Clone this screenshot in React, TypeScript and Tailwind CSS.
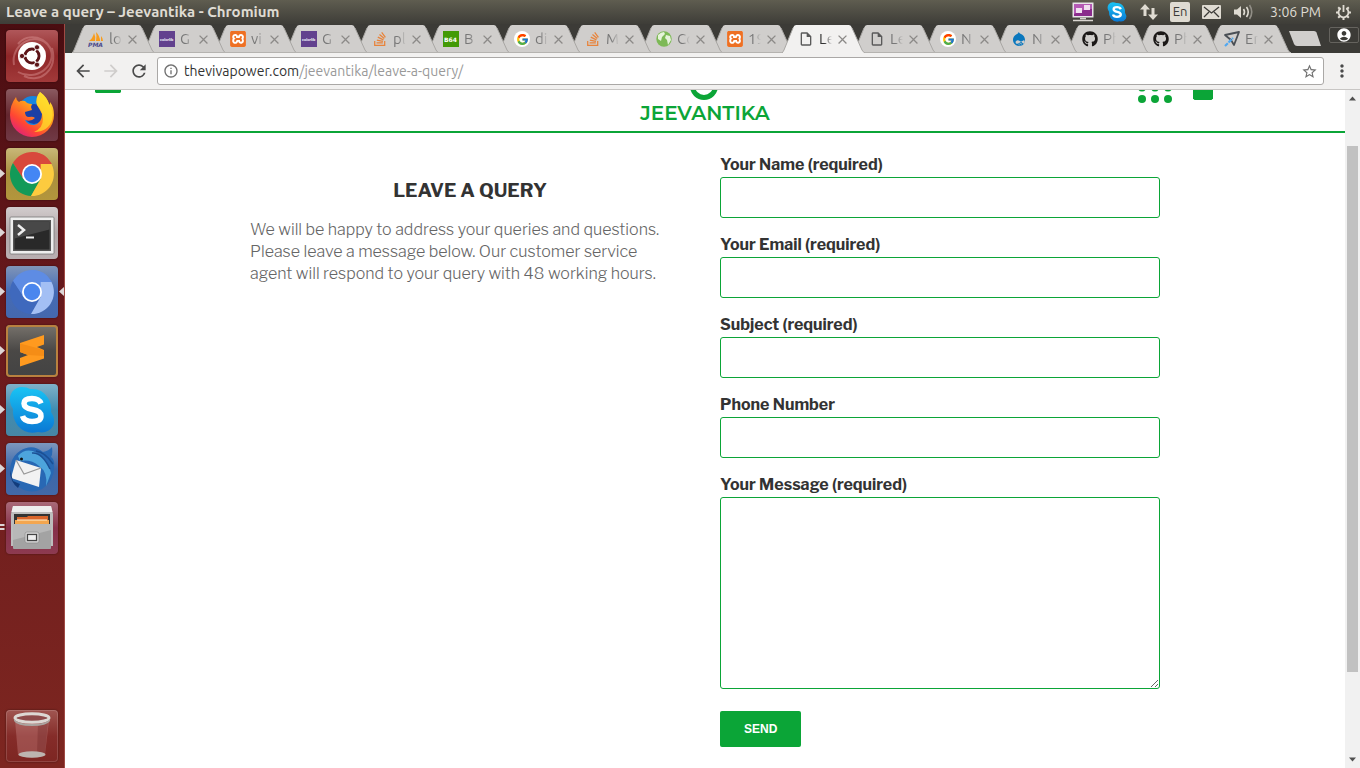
import type { ReactNode } from "react";
import { FaDrupal, FaGithub, FaStackOverflow } from "react-icons/fa";
import { FcGoogle } from "react-icons/fc";
import { SiXampp } from "react-icons/si";
import {
  MdAccountCircle,
  MdArrowBack,
  MdArrowForward,
  MdClose,
  MdInfoOutline,
  MdMoreVert,
  MdOutlineInsertDriveFile,
  MdRefresh,
  MdStarBorder,
} from "react-icons/md";

/* ---------- Top panel ---------- */

function TopPanel() {
  return (
    <header className="flex h-6 shrink-0 items-center justify-between bg-linear-to-b from-[#5f5d50] to-[#3e3d38] pr-2 pl-1.5 text-[#dfdbd2]">
      <h1 className="text-[15px] leading-5 font-bold whitespace-nowrap">Leave a query – Jeevantika - Chromium</h1>
      <div className="flex items-center gap-3">
        <svg width="22" height="20" viewBox="0 0 22 20" aria-hidden="true">
          <rect x=".5" y=".5" width="21" height="15" fill="#e8e4e8" />
          <rect x="2" y="2" width="18" height="12" fill="#8a2b8c" />
          <path d="M2 2h18v5q-9 0-18 5z" fill="#b45ab4" />
          <rect x="4" y="6" width="6" height="5" fill="#f0dff0" />
          <rect x="12" y="3" width="6" height="5" fill="#f0dff0" />
          <path d="M1 18.5h20M8 16.5h6" stroke="#d8d4d0" strokeWidth="1.5" />
        </svg>
        <span className="block size-[22px]">{skype}</span>
        <svg width="18" height="18" viewBox="0 0 18 18" fill="#dfdbd2" aria-hidden="true">
          <path d="M5 1l5 5.5H6.5V13h-3V6.5H0zM13 17l-5-5.5h3.500V5h3v6.500H18z" />
        </svg>
        <span className="flex h-5 w-5 items-center justify-center rounded-xs bg-[#dfdbd2] text-[13px] text-[#3c3b37]">En</span>
        <svg width="19" height="14" viewBox="0 0 19 14" aria-hidden="true">
          <rect width="19" height="14" rx="1" fill="#dfdbd2" />
          <path d="M2 2l7.500 6L17 2M2 12l5-5M17 12l-5-5" fill="none" stroke="#3c3b37" strokeWidth="1.300" />
        </svg>
        <svg width="21" height="16" viewBox="0 0 21 16" aria-hidden="true">
          <path d="M1 5.500h3L8 2v12l-4-3.500H1z" fill="#dfdbd2" />
          <path d="M10.500 5q2 3 0 6M13.500 3q3.500 5 0 10" fill="none" stroke="#dfdbd2" strokeWidth="1.600" />
          <path d="M16.500 1q4.500 7 0 14" fill="none" stroke="#918e86" strokeWidth="1.600" />
        </svg>
        <time className="pr-0.5 pl-1 text-sm whitespace-nowrap">3:06 PM</time>
        <svg width="17" height="17" viewBox="0 0 17 17" fill="none" stroke="#dfdbd2" aria-hidden="true">
          <path d="M5.800 4.200a5 5 0 1 0 5.400 0" strokeWidth="1.800" />
          <path d="M8.500 1v7" strokeWidth="1.800" />
          <path d="M1 8.500h2.500M13.500 8.500H16M8.500 13.500V16M3.200 3.200L5 5M13.800 3.200L12 5M3.200 13.800L5 12M13.800 13.800L12 12" strokeWidth="2" />
        </svg>
      </div>
    </header>
  );
}

/* ---------- Launcher ---------- */

const ubuntu = (
  <svg viewBox="0 0 52 52" aria-hidden="true">
    <path d="M8 35C4 14 30 0 43 16M44 17C52 36 30 52 12 42M18 46c16 8 34-6 28-28M12 14C22 2 42 6 46 24" fill="none" stroke="#e3a0a0" strokeOpacity=".4" strokeWidth="2" />
    <circle cx="26" cy="26" r="14" fill="#fff" />
    <circle cx="26" cy="26" r="7" fill="none" stroke="#5c1418" strokeWidth="3" />
    <path d="M26 26H14M26 26l6-10.400M26 26l6 10.400" stroke="#fff" strokeWidth="1.500" />
    <circle cx="26" cy="26" r="5.300" fill="#fff" />
    <g fill="#5c1418" stroke="#fff" strokeWidth=".8">
      <circle cx="16" cy="26" r="2.600" />
      <circle cx="31" cy="17.300" r="2.600" />
      <circle cx="31" cy="34.700" r="2.600" />
    </g>
  </svg>
);

const firefox = (
  <svg viewBox="0 0 52 52" aria-hidden="true">
    <defs>
      <linearGradient id="ffBody" x1=".85" y1=".05" x2=".2" y2=".95">
        <stop offset="0" stopColor="#ffe830" />
        <stop offset=".4" stopColor="#ff9a1a" />
        <stop offset=".75" stopColor="#ff4633" />
        <stop offset="1" stopColor="#e02378" />
      </linearGradient>
    </defs>
    <circle cx="27" cy="22" r="15" fill="#1686e0" />
    <circle cx="28" cy="25" r="10" fill="#1b3fa6" />
    <path d="M10 8q-6 8-6 18a22 22 0 0 0 44 0q0-8-4-13 0 2-.5 3Q41 8 34 3q-5 6-3 13 3 5 5 9 0 9-8 11-7 0-9-5 6 2 10-2-2-2-6-1-4 0-4-5l7-2-1-3 1-3q-5 0-7-3-4-1-6 1-3-2-3-5z" fill="url(#ffBody)" />
    <path d="M34 3q-5 6-3 13 6 7 6 14 0 9-9 13 14 0 18-12 2-9-2.500-15Q41 8 34 3z" fill="#ffdf2c" fillOpacity=".75" />
  </svg>
);

type RingProps = { top: string; left: string; right: string; core: string };

function ChromeDisc({ top, left, right, core }: RingProps) {
  return (
    <svg viewBox="0 0 52 52" aria-hidden="true">
      <path d="M26 26V4a22 22 0 0 1 19.050 11z" fill={top} />
      <path d="M6.950 15A22 22 0 0 1 45.050 15L46 16H26l-8.660 15z" fill={top} />
      <path d="M6.950 15A22 22 0 0 0 25 48l9.660-17H26l-8.660 0z" fill={left} />
      <path d="M45.500 16A22 22 0 0 1 25 48l9.660-17L34.660 16z" fill={right} />
      <circle cx="26" cy="26" r="10" fill="#fff" />
      <circle cx="26" cy="26" r="8.200" fill={core} />
    </svg>
  );
}

const terminal = (
  <svg viewBox="0 0 52 52" aria-hidden="true">
    <rect x="4" y="10" width="44" height="37" rx="1" fill="#eee" stroke="#777" strokeWidth=".8" />
    <rect x="7" y="13" width="38" height="31" fill="#555" />
    <rect x="8.500" y="14.500" width="35" height="28" fill="#292929" />
    <path d="M8.500 14.500h35v8l-35 9z" fill="#484848" />
    <path d="M12 18l6 5-6 5" fill="none" stroke="#eee" strokeWidth="2.500" />
    <path d="M20 30.500h8" stroke="#eee" strokeWidth="2" />
  </svg>
);

const sublime = (
  <svg viewBox="0 0 52 52" aria-hidden="true">
    <path d="M14 18l24-8v9.500L31 22l7 3v8.500l-24 8V33l8-3-8-3z" fill="#ff9a1f" />
    <path d="M14 18.500L31 23l7 2.500V31l-16-1-8-3z" fill="#f58d16" />
  </svg>
);

const skype = (
  <svg viewBox="0 0 52 52" aria-hidden="true">
    <defs>
      <linearGradient id="skyBody" x1="0" y1="0" x2="0" y2="1">
        <stop offset="0" stopColor="#1ac4f4" />
        <stop offset="1" stopColor="#0a78d4" />
      </linearGradient>
    </defs>
    <path d="M16 3q5 0 8 2 12-1 18 9 4 7 3 14 5 7 2 14-5 8-15 6-12 3-20-6-6-8-5-17Q1 16 6 8q4-5 10-5z" fill="url(#skyBody)" />
    <path d="M35 19.500q-2-5-9-5-8 0-8 5 0 4.500 8.500 6 8.500 1.500 8.500 6.500 0 5.500-9 5.500-8 0-9.500-5.500" fill="none" stroke="#fff" strokeWidth="5.500" />
  </svg>
);

const thunderbird = (
  <svg viewBox="0 0 52 52" aria-hidden="true">
    <path d="M14 8Q26 0 37 9q6-1 9-5 1 7-1 10 4 3 3 9 1 14-12 23-14 7-27-5-7-9-4-20 2-9 9-13z" fill="#2868b4" />
    <path d="M12 13Q20 4 31 10q11 6 14 20l-5 13q2-14-7-20-8-7-19-5z" fill="#4da4dc" />
    <path d="M26 10q10-1 18 16M30 8q9 1 17 13" fill="none" stroke="#1b4f94" strokeWidth="1.500" />
    <path d="M10 17l25 8-2 19-28-9z" fill="#f2f2f2" />
    <path d="M10 17l8 14 17-6" fill="none" stroke="#999" strokeWidth="1.200" />
    <path d="M4 27l3 11 7 3-2 4Q4 39 4 27z" fill="#123c7c" />
    <circle cx="15.500" cy="16" r="1.500" fill="#111" />
  </svg>
);

const files = (
  <svg viewBox="0 0 52 52" aria-hidden="true">
    <path d="M7 4h38l2 8v32H5V12z" fill="#bdbdbd" />
    <path d="M7 4h38l1.500 6h-41z" fill="#eee" />
    <rect x="8" y="12" width="36" height="12" fill="#333" />
    <path d="M11 24v-9h10l1-1h20v10z" fill="#d9652b" />
    <path d="M9 24v-6h34v6z" fill="#f3a64f" />
    <path d="M11 18h30" stroke="#fff0d0" strokeWidth="1" />
    <rect x="7" y="22" width="38" height="25" rx="1" fill="#a3a3a3" />
    <path d="M7 22h38v6L7 38z" fill="#b8b8b8" />
    <rect x="19" y="30" width="14" height="11" rx="2" fill="#d0d0d0" stroke="#888" strokeWidth=".6" />
    <rect x="21.500" y="32.500" width="9" height="6" fill="#eee" stroke="#444" strokeWidth="1.200" />
  </svg>
);

const trash = (
  <svg viewBox="0 0 52 52" aria-hidden="true">
    <path d="M9 10h34l-4 35q-13 5-27 0z" fill="#d9a0a0" fillOpacity=".3" />
    <path d="M32 14l-1 30 8-1 3-31z" fill="#5c1512" fillOpacity=".25" />
    <ellipse cx="26" cy="44.500" rx="13.500" ry="3.200" fill="#bdb5b0" />
    <ellipse cx="26" cy="8" rx="17" ry="4.200" fill="#8e4b4b" stroke="#ddd8d4" strokeWidth="3" />
    <path d="M8 9q3 5 18 5t18-5v2q-3 5-18 5T8 11z" fill="#aaa4a0" />
  </svg>
);

type Launch = { name: string; tile: string; art: ReactNode; pip?: "one" | "two" | "focus" };

const launchers: Launch[] = [
  { name: "Search", tile: "from-[#b0575a] via-[#8f2628] to-[#a23a3a]", art: ubuntu },
  { name: "Firefox", tile: "from-[#8b5a60] via-[#64262f] to-[#713a46]", art: firefox },
  {
    name: "Chrome",
    tile: "from-[#c9b878] via-[#a98f3e] to-[#b3963c]",
    art: <ChromeDisc top="#d8483c" left="#129a58" right="#fccb3f" core="#4486f4" />,
    pip: "one",
  },
  { name: "Terminal", tile: "from-[#d2cccd] via-[#b2a8aa] to-[#b9afb1]", art: terminal, pip: "one" },
  {
    name: "Chromium",
    tile: "from-[#8095b8] via-[#456bb5] to-[#4468ae]",
    art: <ChromeDisc top="#5e8ce4" left="#3f69bd" right="#a3bff4" core="#4a86ee" />,
    pip: "focus",
  },
  { name: "Sublime Text", tile: "from-[#77726c] via-[#4a4846] to-[#434343] ring-2 ring-[#b9813f] ring-inset", art: sublime, pip: "one" },
  { name: "Skype", tile: "from-[#7fb2ca] via-[#3f8cb0] to-[#4786a4]", art: skype, pip: "one" },
  { name: "Thunderbird", tile: "from-[#7d97bd] via-[#3b66a8] to-[#4269a8]", art: thunderbird, pip: "one" },
  { name: "Files", tile: "from-[#a96a79] via-[#86304a] to-[#8d3a50]", art: files, pip: "two" },
];

function LaunchTile({ name, tile, art, pip }: Launch) {
  return (
    <li className="relative px-1.5">
      <button
        type="button"
        aria-label={name}
        className={`block size-[52px] rounded-sm bg-linear-to-b shadow-[0_0_2px_rgba(0,0,0,.5)] ${tile}`}
      >
        {art}
      </button>
      {(pip === "one" || pip === "focus") && (
        <svg className="absolute top-[21px] left-0" width="5" height="9" viewBox="0 0 5 9" aria-hidden="true">
          <path d="M0 0l5 4.500L0 9z" fill="#ddd6d6" />
        </svg>
      )}
      {pip === "two" && (
        <svg className="absolute top-[21px] left-0" width="5" height="9" viewBox="0 0 5 9" aria-hidden="true">
          <path d="M0 1h4l1 1-1 1H0zM0 5h4l1 1-1 1H0z" fill="#ddd6d6" />
        </svg>
      )}
      {pip === "focus" && (
        <svg className="absolute top-[21px] right-0" width="5" height="9" viewBox="0 0 5 9" aria-hidden="true">
          <path d="M5 0L0 4.500 5 9z" fill="#ddd6d6" />
        </svg>
      )}
    </li>
  );
}

function Launcher() {
  return (
    <nav
      aria-label="Launcher"
      className="flex w-[65px] shrink-0 flex-col justify-between border-r border-[#a04a44] bg-linear-to-b from-[#4a0d11] via-[#6a1a1d] via-40% to-[#7d2620] pt-1.5 pb-1.5"
    >
      <ul className="flex flex-col gap-[7px]">
        {launchers.map((l) => (
          <LaunchTile key={l.name} {...l} />
        ))}
      </ul>
      <ul>
        <LaunchTile name="Trash" tile="from-[#a05551] via-[#852c29] to-[#7d2622] ring-1 ring-white/15 ring-inset" art={trash} />
      </ul>
    </nav>
  );
}

/* ---------- Browser tabs ---------- */

const pma = (
  <svg viewBox="0 0 16 16" aria-hidden="true">
    <path d="M1 10Q5 7 6 2q2 4 1 8zM8 10q1-5 0-9 4 4 4 9zM13 10V5q2 2 2 5z" fill="#f89c1c" />
    <text x="0" y="15.500" fontSize="6" fontWeight="700" fontStyle="italic" fontFamily="DejaVu Sans, sans-serif" fill="#4b4a8c">PMA</text>
  </svg>
);
const colorlib = (
  <svg viewBox="0 0 16 16" aria-hidden="true">
    <rect width="16" height="16" fill="#62418e" />
    <text x="1" y="9.500" fontSize="4" fontWeight="700" fontFamily="Lato, sans-serif" fill="#fff">colorlib</text>
  </svg>
);
const xampp = (
  <span className="block size-4 rounded-xs bg-white">
    <SiXampp className="size-4 text-[#ee7023]" />
  </span>
);
const b64 = (
  <svg viewBox="0 0 16 16" aria-hidden="true">
    <rect width="16" height="16" fill="#439a06" />
    <text x="1" y="10.500" fontSize="6" fontWeight="700" fontFamily="DejaVu Sans, sans-serif" fill="#fff">B64</text>
  </svg>
);
const globe = (
  <svg viewBox="0 0 16 16" aria-hidden="true">
    <circle cx="8" cy="8" r="7.700" fill="#7db956" />
    <path d="M2 4q3-3 6-3l1 2-3 3-1 4-3-2zM10 4l4 1 1 4-3 5-1-5-2-2z" fill="#e6f3da" />
  </svg>
);
const plane = (
  <svg viewBox="0 0 16 16" aria-hidden="true">
    <path d="M1 4l14-3-5 13-3-5z" fill="none" stroke="#4a4f55" strokeWidth="1.800" strokeLinejoin="round" />
    <path d="M1 15l8-8" stroke="#52a8f0" strokeWidth="2.200" strokeDasharray="4 1" />
  </svg>
);
const google = (
  <span className="flex size-4 items-center justify-center rounded-full bg-white">
    <FcGoogle className="size-[13px]" />
  </span>
);
const stack = <FaStackOverflow className="size-4 text-[#e8833a]" />;
const page = <MdOutlineInsertDriveFile className="size-4 text-[#5a5a5a]" />;
const github = <FaGithub className="size-4 text-[#1b1817]" />;
const drupal = <FaDrupal className="size-4 text-[#0a77bd]" />;

const tabs: { icon: ReactNode; title: string; active?: boolean }[] = [
  { icon: pma, title: "lo" },
  { icon: colorlib, title: "G" },
  { icon: xampp, title: "vi" },
  { icon: colorlib, title: "G" },
  { icon: stack, title: "pl" },
  { icon: b64, title: "B" },
  { icon: google, title: "di" },
  { icon: stack, title: "M" },
  { icon: globe, title: "Co" },
  { icon: xampp, title: "19" },
  { icon: page, title: "Le", active: true },
  { icon: page, title: "Le" },
  { icon: google, title: "N" },
  { icon: drupal, title: "N" },
  { icon: github, title: "Ph" },
  { icon: github, title: "Ph" },
  { icon: plane, title: "En" },
];

function TabStrip() {
  return (
    <div className="flex h-[29px] shrink-0 bg-[#3c3b37] pl-[7px]">
      <ul className="flex pt-px">
        {tabs.map((t, i) => (
          <li key={i} className="relative flex w-[71px] items-center pl-4" style={{ zIndex: t.active ? 40 : 20 - i }}>
            <svg className="absolute bottom-0 left-0" width="83" height="28" viewBox="0 0 83 28" aria-hidden="true">
              <path d="M0 28Q1 27 2 25L11 3Q12 0 14 0H67Q69 0 70 3L80 25Q81 27 83 28z" fill={t.active ? "#f2f1f0" : "#d0cecc"} />
              <path d="M70 3L80 25Q81 27 83 28M0 28Q1 27 2 25L11 3" fill="none" stroke="#a9a7a4" />
              {!t.active && <path d="M0 27.500H83" stroke="#b5b3b0" />}
            </svg>
            <a href="#tab" className="relative flex items-center gap-[5px]">
              <span className="block size-4 shrink-0">{t.icon}</span>
              <span
                className={`w-[13px] overflow-hidden mask-r-from-40% text-[15px] leading-5 ${t.active ? "text-[#333]" : "text-[#777]"}`}
              >
                {t.title}
              </span>
            </a>
            <button type="button" aria-label="Close tab" className="relative ml-[3px] shrink-0 text-[#8c8a88]">
              <MdClose className="size-[15px]" />
            </button>
          </li>
        ))}
      </ul>
      <button type="button" aria-label="New tab" className="ml-[10px] flex items-center">
        <svg width="32" height="15" viewBox="0 0 32 15" aria-hidden="true">
          <path d="M0 0H25Q27 0 27.500 1.500L32 15H8Q6 15 5 13z" fill="#d0cecc" />
        </svg>
      </button>
      <button
        type="button"
        aria-label="Profile"
        className="mt-[3px] mr-px ml-auto flex h-4 w-[30px] items-center justify-center rounded-xs border border-[#65635e] text-white"
      >
        <MdAccountCircle className="size-4 shrink-0" />
      </button>
    </div>
  );
}

function Toolbar() {
  return (
    <div className="flex h-[37px] shrink-0 items-center border-b border-[#c8c6c4] bg-[#f2f1f0] pr-2 pl-2 text-[#4a4a4a]">
      <div className="flex items-center gap-2">
        <button type="button" aria-label="Back"><MdArrowBack className="size-5" /></button>
        <button type="button" aria-label="Forward" className="text-[#cfcdcb]"><MdArrowForward className="size-5" /></button>
        <button type="button" aria-label="Reload"><MdRefresh className="size-5" /></button>
      </div>
      <div className="mr-2 ml-2 flex h-7 flex-1 items-center gap-[5px] rounded-[3px] border border-[#aaa8a6] bg-white px-[5px]">
        <MdInfoOutline className="size-4 text-[#707070]" />
        <a href="#address" className="flex-1 text-sm whitespace-nowrap text-[#999]">
          <span className="text-[#333]">thevivapower.com</span>/jeevantika/leave-a-query/
        </a>
        <button type="button" aria-label="Bookmark"><MdStarBorder className="size-[17px] text-[#707070]" /></button>
      </div>
      <button type="button" aria-label="Menu"><MdMoreVert className="size-5" /></button>
    </div>
  );
}

/* ---------- Web page ---------- */

function SiteHeader() {
  return (
    <header className="grid h-[43px] shrink-0 grid-cols-[1fr_auto_1fr] items-start border-b-2 border-[#0ba537] px-[30px] text-[#0ba537]">
      <button type="button" aria-label="Open menu" className="justify-self-start">
        <svg width="26" height="3" viewBox="0 0 26 3" fill="currentColor" aria-hidden="true">
          <path d="M0 0h26v2l-1 1H1L0 2z" />
        </svg>
      </button>
      <a href="#home" className="flex flex-col items-center">
        <svg width="30" height="12" viewBox="0 0 30 12" fill="none" aria-hidden="true">
          <circle cx="14" cy="-4" r="11.500" stroke="currentColor" strokeWidth="5" />
        </svg>
        <span className="font-[Montserrat,Inter,sans-serif] text-[20px] leading-[22px] font-semibold">JEEVANTIKA</span>
      </a>
      <div className="mr-[102px] flex items-start gap-5 justify-self-end">
        <button type="button" aria-label="Apps">
          <svg width="35" height="14" viewBox="0 0 35 14" fill="currentColor" aria-hidden="true">
            <circle cx="4" cy="-2.500" r="4" />
            <circle cx="17" cy="-2.500" r="4" />
            <circle cx="30" cy="-2.500" r="4" />
            <circle cx="4" cy="9" r="4" />
            <circle cx="17" cy="9" r="4" />
            <circle cx="30" cy="9" r="4" />
          </svg>
        </button>
        <button type="button" aria-label="Cart">
          <svg width="20" height="10" viewBox="0 0 20 10" fill="currentColor" aria-hidden="true">
            <path d="M0 0h20v8.500L18.500 10h-17L0 8.500z" />
          </svg>
        </button>
      </div>
    </header>
  );
}

const fields = [
  { id: "name", label: "Your Name (required)", type: "text" },
  { id: "email", label: "Your Email (required)", type: "email" },
  { id: "subject", label: "Subject (required)", type: "text" },
  { id: "phone", label: "Phone Number", type: "tel" },
];

function QueryPage() {
  return (
    <main className="mx-auto grid w-full max-w-[910px] grid-cols-2 gap-[30px] pt-5 font-['Libre_Franklin',Inter,sans-serif]">
      <section className="pt-[26px]">
        <h2 className="text-center text-[19px] leading-6 font-bold text-[#333]">LEAVE A QUERY</h2>
        <p className="mt-4 pr-5 text-[16px] leading-[22px] font-light text-[#666]">
          We will be happy to address your queries and questions. Please leave a message below. Our customer service
          agent will respond to your query with 48 working hours.
        </p>
      </section>
      <form className="flex flex-col items-start" onSubmit={(e) => e.preventDefault()}>
        {fields.map((f) => (
          <div key={f.id} className="mb-[15px] w-full">
            <label htmlFor={f.id} className="block text-[16px] leading-6 font-bold text-[#333]">
              {f.label}
            </label>
            <input
              id={f.id}
              type={f.type}
              className="block h-[41px] w-full rounded-[3px] border border-[#0ba537] bg-white px-2.5 text-[#666]"
            />
          </div>
        ))}
        <label htmlFor="message" className="block text-[16px] leading-6 font-bold text-[#333]">
          Your Message (required)
        </label>
        <textarea
          id="message"
          className="block h-48 w-full resize rounded-[3px] border border-[#0ba537] bg-white px-2.5 py-2 text-[#666]"
        />
        <button
          type="submit"
          className="mt-[22px] rounded-xs bg-[#0ba537] px-6 py-2.5 font-['Liberation_Sans',Arial,sans-serif] text-xs font-bold text-white"
        >
          SEND
        </button>
      </form>
    </main>
  );
}

function Scrollbar() {
  return (
    <div className="flex w-[15px] shrink-0 flex-col items-center bg-[#f1f1f1]" aria-hidden="true">
      <svg width="15" height="17" viewBox="0 0 15 17">
        <path d="M4 10.500L7.500 6.500 11 10.500z" fill="#505050" />
      </svg>
      <div className="flex w-full flex-1 flex-col px-0.5 pt-[39px]">
        <div className="basis-[87%] bg-[#c1c1c1]" />
      </div>
      <svg width="15" height="17" viewBox="0 0 15 17">
        <path d="M4 6.500h7L7.500 10.500z" fill="#505050" />
      </svg>
    </div>
  );
}

export default function App() {
  return (
    <div className="flex h-screen flex-col overflow-hidden bg-white font-['Ubuntu','Noto_Sans',sans-serif]">
      <TopPanel />
      <div className="flex min-h-0 flex-1">
        <Launcher />
        <div className="flex min-w-0 flex-1 flex-col">
          <TabStrip />
          <Toolbar />
          <div className="flex min-h-0 flex-1">
            <div className="flex min-w-0 flex-1 flex-col overflow-hidden">
              <SiteHeader />
              <QueryPage />
            </div>
            <Scrollbar />
          </div>
        </div>
      </div>
    </div>
  );
}
